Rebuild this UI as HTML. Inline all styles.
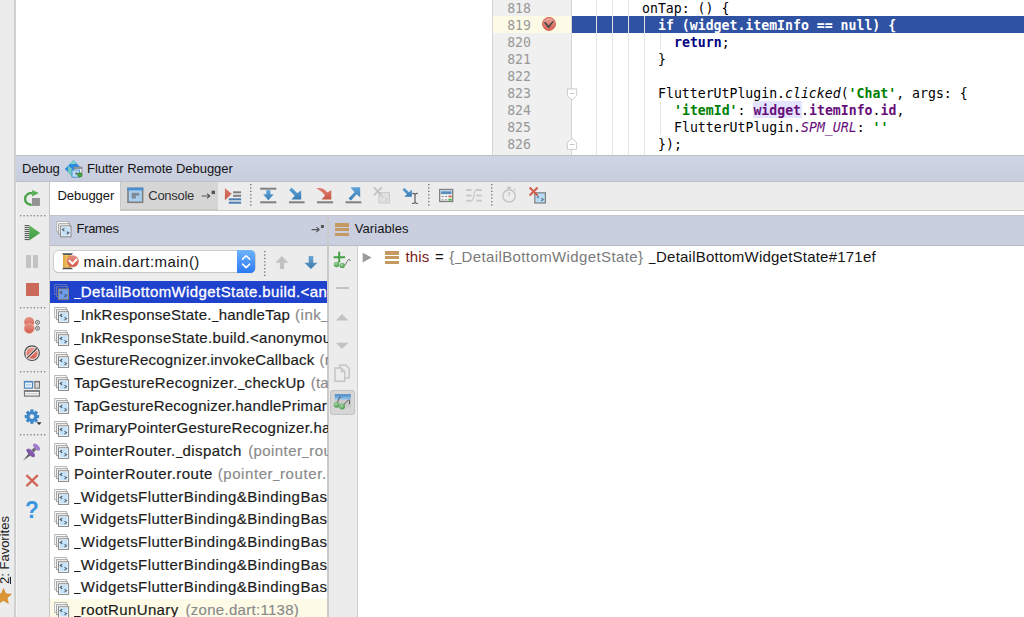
<!DOCTYPE html>
<html>
<head>
<meta charset="utf-8">
<title>Flutter Remote Debugger</title>
<style>
html,body{margin:0;padding:0;}
body{width:1024px;height:617px;overflow:hidden;background:#fff;position:relative;font-family:"Liberation Sans",sans-serif;color:#1d1d1d;}
.abs{position:absolute;overflow:visible;}
.box{position:absolute;}
.code{position:absolute;font-family:"DejaVu Sans Mono","Liberation Mono",monospace;font-size:13.2px;line-height:17px;height:17px;white-space:pre;color:#000;}
.ln{position:absolute;left:500px;width:31px;text-align:right;font-family:"DejaVu Sans Mono","Liberation Mono",monospace;font-size:13.2px;line-height:17px;height:17px;color:#999;}
.kw{color:#000080;font-weight:bold;}
.st{color:#008000;font-weight:bold;}
.fd{color:#660e7a;font-weight:bold;}
.sf{color:#660e7a;font-style:italic;}
.it{font-style:italic;}
.guide{position:absolute;width:1px;background:#e4e4e4;}
.ui{position:absolute;white-space:pre;font-size:13px;line-height:16px;color:#141414;}
.fr{-webkit-text-stroke:0.18px currentColor;position:absolute;left:74px;white-space:pre;font-size:15px;line-height:20px;height:20px;color:#1c1c1c;overflow:hidden;width:253.5px;}
.fr i{font-style:normal;color:#8a8a8a;}
.fr.sel{color:#fff;-webkit-text-stroke:0.3px #fff;}
.fr u,.ui u{text-decoration:none;letter-spacing:0;display:inline-block;transform:scaleX(0.78);transform-origin:0 50%;margin-right:-1.5px;position:relative;top:-0.8px;}
.hdot{position:absolute;height:1.4px;width:26px;background:repeating-linear-gradient(90deg,#8c8c8c 0,#8c8c8c 1.3px,transparent 1.3px,transparent 3.45px);}
.vdot{position:absolute;width:1.4px;background:repeating-linear-gradient(180deg,#8c8c8c 0,#8c8c8c 1.3px,transparent 1.3px,transparent 3.4px);}
</style>
</head>
<body>
<svg width="0" height="0" style="position:absolute">
<defs>
<linearGradient id="gblue" x1="0" y1="0" x2="0" y2="1"><stop offset="0" stop-color="#5fa4d8"/><stop offset="1" stop-color="#387cb5"/></linearGradient>
<linearGradient id="gsteel" x1="0" y1="0" x2="0" y2="1"><stop offset="0" stop-color="#6ba5d1"/><stop offset="1" stop-color="#3a7aae"/></linearGradient>
<linearGradient id="gred" x1="0" y1="0" x2="0" y2="1"><stop offset="0" stop-color="#dd7d6d"/><stop offset="1" stop-color="#c75846"/></linearGradient>
<linearGradient id="ggreen" x1="0" y1="0" x2="0" y2="1"><stop offset="0" stop-color="#62b562"/><stop offset="1" stop-color="#3f9a3f"/></linearGradient>
<linearGradient id="gcombo" x1="0" y1="0" x2="0" y2="1"><stop offset="0" stop-color="#6cb3fb"/><stop offset="1" stop-color="#2a78f4"/></linearGradient>
</defs>
</svg>

<!-- left tool strip -->
<div class="box" style="left:0;top:0;width:14.3px;height:617px;background:#ececec;"></div>
<div class="box" style="left:14.3px;top:0;width:1.5px;height:617px;background:#d0d0d0;"></div>
<div class="ui" style="left:-3.5px;top:584px;font-size:13px;line-height:16px;transform-origin:0 0;transform:rotate(-90deg);color:#222;"><span style="text-decoration:underline;">2</span>: Favorites</div>
<svg class="abs" style="left:-5px;top:588px;" width="17" height="16" viewBox="0 0 17 16"><path d="M8.5 0.6 L10.7 5.7 L16.3 6.2 L12.1 9.9 L13.4 15.4 L8.5 12.5 L3.6 15.4 L4.9 9.9 L0.7 6.2 L6.3 5.7 Z" fill="#dc9533" stroke="#c9842a" stroke-width="0.6"/></svg>

<!-- editor gutter -->
<div class="box" style="left:492px;top:0;width:1px;height:155px;background:#d6d6d6;"></div>
<div class="box" style="left:493px;top:0;width:79px;height:155px;background:#f0f0f0;"></div>
<div class="box" style="left:493px;top:16px;width:79px;height:17px;background:#fdfbe6;"></div>
<div class="box" style="left:572px;top:16px;width:452px;height:17px;background:#2f52a3;"></div>
<div class="guide" style="left:596px;top:0;height:155px;"></div>
<div class="guide" style="left:612px;top:0;height:155px;"></div>
<div class="guide" style="left:628px;top:0;height:155px;"></div>
<div class="guide" style="left:644px;top:16px;height:139px;"></div>
<div class="guide" style="left:660px;top:33px;height:17px;"></div>
<div class="guide" style="left:660px;top:101px;height:34px;"></div>

<div class="ln" style="top:0px;">818</div>
<div class="ln" style="top:17px;">819</div>
<div class="ln" style="top:34px;">820</div>
<div class="ln" style="top:51px;">821</div>
<div class="ln" style="top:68px;">822</div>
<div class="ln" style="top:85px;">823</div>
<div class="ln" style="top:102px;">824</div>
<div class="ln" style="top:119px;">825</div>
<div class="ln" style="top:136px;">826</div>

<!-- breakpoint icon -->
<svg class="abs" style="left:541px;top:16px;" width="16" height="16" viewBox="0 0 16 16"><defs><linearGradient id="bp" x1="0" y1="0" x2="0" y2="1"><stop offset="0" stop-color="#eaa9a0"/><stop offset="0.75" stop-color="#db6c5f"/></linearGradient></defs><circle cx="8" cy="7.9" r="6.5" fill="url(#bp)" stroke="#d0584b" stroke-width="0.9"/><path d="M3.6 6.2 L7.6 11 L12.1 5.4" fill="none" stroke="#38454a" stroke-width="1.5"/></svg>
<!-- fold markers -->
<div class="box" style="left:571px;top:0;width:1px;height:155px;background:#d6d6d6;"></div>
<svg class="abs" style="left:566px;top:88px;" width="12" height="13" viewBox="0 0 12 13"><path d="M1.4 0.9 H10.7 V7.8 L6.05 12 L1.4 7.8 Z" fill="#fff" stroke="#c6c6c6" stroke-width="0.9"/><path d="M3.7 5.4 H8.5" stroke="#c0c0c0" stroke-width="0.9"/></svg>
<svg class="abs" style="left:566px;top:138px;" width="12" height="13" viewBox="0 0 12 13"><path d="M1.4 11.4 H10.7 V4.6 L6.05 0.5 L1.4 4.6 Z" fill="#fff" stroke="#c6c6c6" stroke-width="0.9"/><path d="M3.7 6.5 H8.5" stroke="#c0c0c0" stroke-width="0.9"/></svg>

<!-- code -->
<div class="code" style="left:642px;top:0px;">onTap: () {</div>
<div class="code" style="left:658px;top:17px;color:#fff;font-weight:bold;">if (widget.itemInfo == null) {</div>
<div class="code" style="left:674px;top:34px;"><span class="kw">return</span>;</div>
<div class="code" style="left:658px;top:51px;">}</div>
<div class="code" style="left:658px;top:85px;">FlutterUtPlugin.<span class="it">clicked</span>(<span class="st">'Chat'</span>, args: {</div>
<div class="box" style="left:753px;top:101px;width:49px;height:17px;background:#e4e4ff;"></div>
<div class="code" style="left:674px;top:102px;"><span class="st">'itemId'</span>: <span class="fd">widget</span>.<span class="fd">itemInfo</span>.<span class="fd">id</span>,</div>
<div class="code" style="left:674px;top:119px;">FlutterUtPlugin.<span class="sf">SPM_URL</span>: <span class="st">''</span></div>
<div class="code" style="left:658px;top:136px;">});</div>

<!-- debug header -->
<div class="box" style="left:16px;top:155px;width:1008px;height:27px;background:linear-gradient(#d0d6e6,#c7cddd);"></div>
<div class="box" style="left:16px;top:181.2px;width:1008px;height:0.8px;background:#bcc1cd;"></div>
<div class="box" style="left:16px;top:155px;width:1008px;height:1px;background:#bdc0c8;"></div>
<div class="ui" style="left:22px;top:161px;letter-spacing:-0.15px;">Debug</div>
<div class="ui" style="left:87px;top:161px;letter-spacing:-0.04px;">Flutter Remote Debugger</div>
<!-- dart/flutter run icon -->
<svg class="abs" style="left:64px;top:159px;" width="19" height="19" viewBox="0 0 19 19">
<path d="M9.4 1 L17.9 10 L9.4 18.8 L0.9 10 Z" fill="#2c8ae2"/>
<path d="M9.4 1 L12.6 4.9 L5.5 4.9 Z" fill="#7fd3c2"/>
<path d="M4 6.4 L8.2 10 L8.2 18 L4 13.6 Z" fill="#74c9bd"/>
<rect x="10.3" y="8.2" width="7.6" height="6.5" fill="#f2f2f2" stroke="#8a8a8a" stroke-width="0.9"/>
<rect x="10.3" y="8.2" width="7.6" height="1.7" fill="#8a8a8a"/>
<rect x="8" y="11" width="7.4" height="7.2" fill="#b7dcf7" stroke="#4d8fd0" stroke-width="0.9"/>
<path d="M14.6 14.5 H11.5 M12.9 13 L11.3 14.5 L12.9 16" stroke="#666" stroke-width="0.9" fill="none"/>
<circle cx="15.9" cy="15.9" r="2.2" fill="#46a53f" stroke="#2f7f2b" stroke-width="0.7"/>
</svg>

<!-- toolbar row -->
<div class="box" style="left:16px;top:182px;width:1008px;height:28.3px;background:#ececec;"></div>
<div class="box" style="left:16px;top:210.2px;width:1008px;height:1px;background:#cacaca;"></div>
<div class="box" style="left:49.8px;top:182px;width:70px;height:34px;background:#fff;"></div>
<div class="box" style="left:119.6px;top:182px;width:98.9px;height:28.4px;background:#d6d6d6;box-shadow:inset 1px -1px 0 #c8c8c8;"></div>
<div class="ui" style="left:57.5px;top:188px;letter-spacing:-0.05px;">Debugger</div>
<div class="ui" style="left:148.3px;top:188px;color:#333;letter-spacing:-0.3px;">Console</div>
<!-- console icon -->
<svg class="abs" style="left:127px;top:187px;" width="17" height="17" viewBox="0 0 17 17">
<rect x="1" y="1.4" width="14.6" height="13.9" fill="#a9d0f0" stroke="#7e7e7e" stroke-width="1.6"/>
<rect x="0.2" y="0.6" width="16.2" height="2.8" fill="#4b8fcf"/>
<rect x="4.6" y="5.8" width="7.8" height="5.8" fill="#7f8a94"/>
<rect x="8.8" y="8.6" width="3.8" height="3.2" fill="#a9d0f0"/>
</svg>
<!-- pin arrow (console) -->
<svg class="abs" style="left:201px;top:189px;" width="16" height="12" viewBox="0 0 16 12"><path d="M0.8 7 H8.6 M6 4.6 L8.8 7 L6 9.4" fill="none" stroke="#555" stroke-width="1.1"/><rect x="10.6" y="1.7" width="3.4" height="3.4" fill="#555"/></svg>

<!-- show execution point -->
<svg class="abs" style="left:224px;top:186px;" width="19" height="19" viewBox="0 0 19 19">
<path d="M0.9 1.9 L7.7 7.7 L0.9 14.2 Z" fill="url(#gred)"/>
<rect x="9.1" y="5.3" width="8" height="2" fill="#808080"/>
<rect x="9.1" y="8.8" width="8" height="2" fill="#808080"/>
<rect x="4.8" y="12.3" width="12.3" height="2" fill="#4d7faf"/>
<rect x="4.8" y="15.7" width="12.3" height="2" fill="#4d7faf"/>
</svg>
<svg class="abs" style="left:250.4px;top:183.5px;" width="2" height="23.8" viewBox="0 0 2 23.8" fill="#7c7c7c"><rect x="0" y="0.00" width="1.5" height="1.25"/><rect x="0" y="3.40" width="1.5" height="1.25"/><rect x="0" y="6.80" width="1.5" height="1.25"/><rect x="0" y="10.20" width="1.5" height="1.25"/><rect x="0" y="13.60" width="1.5" height="1.25"/><rect x="0" y="17.00" width="1.5" height="1.25"/><rect x="0" y="20.40" width="1.5" height="1.25"/></svg>
<!-- step over -->
<svg class="abs" style="left:259px;top:186px;" width="19" height="19" viewBox="0 0 19 19">
<rect x="1.2" y="1.7" width="16.1" height="2" fill="#808080"/>
<rect x="1.2" y="15.3" width="16.1" height="2" fill="#808080"/>
<path d="M7.3 4.2 H11.4 V8.3 H14.7 L9.4 14.2 L4.1 8.3 H7.3 Z" fill="url(#gblue)"/>
</svg>
<!-- step into -->
<svg class="abs" style="left:288px;top:186px;" width="19" height="19" viewBox="0 0 19 19">
<rect x="0.9" y="15.3" width="15.7" height="2" fill="#808080"/>
<path d="M1.1 4 L3.6 1.6 L9.3 7.3 L13.2 4.2 V13.6 H3.3 L6.8 9.8 Z" fill="url(#gblue)"/>
</svg>
<!-- force step into -->
<svg class="abs" style="left:316px;top:186px;" width="19" height="19" viewBox="0 0 19 19">
<rect x="1" y="15.3" width="16.1" height="2" fill="#808080"/>
<path d="M0.3 2.3 C4.5 1.6 8.6 2.6 11.4 6.6 L15.3 4.1 V13.6 H5.6 L9 9.5 C7 6.2 4.4 4.6 0.3 2.3 Z" fill="url(#gred)"/>
</svg>
<!-- step out -->
<svg class="abs" style="left:345px;top:186px;" width="19" height="19" viewBox="0 0 19 19">
<rect x="0.5" y="15.3" width="15.9" height="2" fill="#808080"/>
<path d="M3.5 12.4 L9.6 6.3 L5.4 1.3 H15.2 V11.2 L11.6 8.3 L5.9 14.4 Z" fill="url(#gblue)"/>
</svg>
<!-- drop frame (disabled) -->
<svg class="abs" style="left:372px;top:186px;" width="19" height="19" viewBox="0 0 19 19">
<rect x="6.9" y="6.5" width="10.6" height="10.4" fill="#e0e0e0" stroke="#cbcbcb" stroke-width="1"/>
<path d="M11 10 L9.8 10.8 L11 11.6 M13.2 12.3 L15.1 13.5 L13.2 14.7" stroke="#c6c6c6" stroke-width="0.9" fill="none"/>
<path d="M1.8 1.4 L9.8 9.4 M9.8 1.4 L1.8 9.4" stroke="#c2c2c2" stroke-width="1.9" fill="none"/>
</svg>
<!-- run to cursor -->
<svg class="abs" style="left:401px;top:186px;" width="19" height="19" viewBox="0 0 19 19">
<path d="M1.4 3.8 L3.4 1.8 L7.9 6.2 L10.9 3.6 V10.8 H3.2 L6 8.3 Z" fill="url(#gblue)"/>
<path d="M11.2 7.3 C12.6 7.3 13.4 7.6 14 8.3 C14.6 7.6 15.4 7.3 16.8 7.3 M11.2 17.5 C12.6 17.5 13.4 17.2 14 16.5 C14.6 17.2 15.4 17.5 16.8 17.5 M14 8.3 V16.5" fill="none" stroke="#4a4a4a" stroke-width="1.05"/>
</svg>
<svg class="abs" style="left:427.7px;top:183.5px;" width="2" height="23.8" viewBox="0 0 2 23.8" fill="#7c7c7c"><rect x="0" y="0.00" width="1.5" height="1.25"/><rect x="0" y="3.40" width="1.5" height="1.25"/><rect x="0" y="6.80" width="1.5" height="1.25"/><rect x="0" y="10.20" width="1.5" height="1.25"/><rect x="0" y="13.60" width="1.5" height="1.25"/><rect x="0" y="17.00" width="1.5" height="1.25"/><rect x="0" y="20.40" width="1.5" height="1.25"/></svg>
<!-- evaluate expression -->
<svg class="abs" style="left:438px;top:188px;" width="17" height="15" viewBox="0 0 17 15">
<rect x="1.7" y="1.5" width="13" height="12" fill="#fafafa" stroke="#7d7d7d" stroke-width="1.3"/>
<rect x="2.6" y="2.4" width="11.2" height="1" fill="#a9cff0"/>
<rect x="2.9" y="3.3" width="10.6" height="2.9" fill="#5d8dbd"/>
<rect x="3.5" y="7.9" width="2.2" height="1.2" fill="#8f8f8f"/><rect x="7" y="7.9" width="2.2" height="1.2" fill="#8f8f8f"/>
<rect x="3.5" y="10.8" width="2.2" height="1.8" fill="#b4b4b4"/><rect x="7" y="10.8" width="2.2" height="1.8" fill="#b4b4b4"/>
<rect x="10.5" y="7.6" width="3.2" height="1.7" fill="#d25545"/>
<rect x="10.5" y="10.7" width="3.2" height="1.9" fill="#42b142"/>
</svg>
<!-- trace (disabled) -->
<svg class="abs" style="left:465px;top:187px;" width="19" height="17" viewBox="0 0 19 17">
<path d="M1 2.9 H6.6 M1 8.4 H6.6 M1 13.8 H6.6 M11.3 2.9 H16.9 M11.3 8.4 H16.9 M11.3 13.8 H16.9" stroke="#c9c9c9" stroke-width="2" fill="none"/>
<path d="M6.6 13.8 C9.6 13.8 8.3 2.9 11.3 2.9" stroke="#c9c9c9" stroke-width="1.2" fill="none"/>
</svg>
<svg class="abs" style="left:491.4px;top:183.5px;" width="2" height="23.8" viewBox="0 0 2 23.8" fill="#7c7c7c"><rect x="0" y="0.00" width="1.5" height="1.25"/><rect x="0" y="3.40" width="1.5" height="1.25"/><rect x="0" y="6.80" width="1.5" height="1.25"/><rect x="0" y="10.20" width="1.5" height="1.25"/><rect x="0" y="13.60" width="1.5" height="1.25"/><rect x="0" y="17.00" width="1.5" height="1.25"/><rect x="0" y="20.40" width="1.5" height="1.25"/></svg>
<!-- stopwatch (disabled) -->
<svg class="abs" style="left:500px;top:186px;" width="19" height="19" viewBox="0 0 19 19">
<circle cx="9.1" cy="9.9" r="6.1" fill="none" stroke="#c4c4c4" stroke-width="1.4"/>
<path d="M7 1.6 H11.2" stroke="#c4c4c4" stroke-width="1.6"/>
<path d="M9.1 2 V3.8 M9.1 6 V10 M14 4.2 L15.2 3" stroke="#c4c4c4" stroke-width="1.3"/>
</svg>
<!-- close/remove frame -->
<svg class="abs" style="left:528px;top:186px;" width="19" height="19" viewBox="0 0 19 19">
<rect x="6.8" y="6.8" width="10.6" height="10.2" fill="#b8dcf6" stroke="#7f7f7f" stroke-width="1.2"/>
<path d="M10.6 10.4 L9.4 11.2 L10.6 12 M13.4 12.4 L15.4 13.6 L13.4 14.9" stroke="#39424a" stroke-width="1" fill="none"/>
<path d="M1.6 1.5 L9.6 9.5 M9.6 1.5 L1.6 9.5" stroke="#d1604e" stroke-width="2.1" fill="none"/>
</svg>

<!-- left icon column -->
<div class="box" style="left:16px;top:182px;width:33px;height:435px;background:#ececec;"></div>
<div class="box" style="left:15.8px;top:182px;width:1.2px;height:435px;background:#f6f6f6;"></div>
<div class="box" style="left:48.8px;top:182px;width:1.2px;height:435px;background:#c6c6c6;"></div>
<!-- rerun -->
<svg class="abs" style="left:22px;top:188px;" width="20" height="20" viewBox="0 0 20 20">
<path d="M10.1 5.23 A5.8 5.8 0 1 0 9.7 16.64" fill="none" stroke="#4aa54a" stroke-width="2.4"/>
<path d="M10.1 1.9 L16.8 5.1 L10.1 8.6 Z" fill="#55b055"/>
<rect x="10" y="10" width="7.9" height="7.9" fill="#939393"/>
</svg>
<svg class="abs" style="left:20.2px;top:215.2px;" width="26" height="2" viewBox="0 0 26 2" fill="#858585"><rect x="0.00" y="0" width="1.3" height="1.4"/><rect x="3.45" y="0" width="1.3" height="1.4"/><rect x="6.90" y="0" width="1.3" height="1.4"/><rect x="10.35" y="0" width="1.3" height="1.4"/><rect x="13.80" y="0" width="1.3" height="1.4"/><rect x="17.25" y="0" width="1.3" height="1.4"/><rect x="20.70" y="0" width="1.3" height="1.4"/><rect x="24.15" y="0" width="1.3" height="1.4"/></svg>
<!-- resume -->
<svg class="abs" style="left:23px;top:224px;" width="19" height="18" viewBox="0 0 19 18">
<path d="M1.6 1.6 H6.4 M1.6 3.6 H6.4 M1.6 5.6 H6.4 M1.6 7.6 H6.4 M1.6 9.6 H6.4 M1.6 11.6 H6.4 M1.6 13.6 H6.4 M1.6 15.6 H6.4" stroke="#3c3c3c" stroke-width="0.9"/>
<path d="M6.2 1.2 L17.2 8.9 L6.2 16.6 Z" fill="url(#ggreen)"/>
</svg>
<!-- pause (disabled) -->
<div class="box" style="left:26.1px;top:254.8px;width:5px;height:13.2px;background:#c3c3c3;"></div>
<div class="box" style="left:32.8px;top:254.8px;width:5px;height:13.2px;background:#c3c3c3;"></div>
<!-- stop -->
<div class="box" style="left:25.8px;top:282.9px;width:13.5px;height:13.6px;background:#cb6a5a;"></div>
<svg class="abs" style="left:20.2px;top:307.1px;" width="26" height="2" viewBox="0 0 26 2" fill="#858585"><rect x="0.00" y="0" width="1.3" height="1.4"/><rect x="3.45" y="0" width="1.3" height="1.4"/><rect x="6.90" y="0" width="1.3" height="1.4"/><rect x="10.35" y="0" width="1.3" height="1.4"/><rect x="13.80" y="0" width="1.3" height="1.4"/><rect x="17.25" y="0" width="1.3" height="1.4"/><rect x="20.70" y="0" width="1.3" height="1.4"/><rect x="24.15" y="0" width="1.3" height="1.4"/></svg>
<!-- view breakpoints -->
<svg class="abs" style="left:23px;top:315px;" width="19" height="20" viewBox="0 0 19 20">
<defs><linearGradient id="bpg" x1="0" y1="0" x2="0" y2="1"><stop offset="0" stop-color="#e6978b"/><stop offset="1" stop-color="#d55b4b"/></linearGradient></defs>
<circle cx="6.2" cy="7" r="5" fill="url(#bpg)"/>
<circle cx="6.2" cy="13.3" r="5.1" fill="url(#bpg)" stroke="#eaa79e" stroke-width="0.6"/>
<circle cx="14.5" cy="7.4" r="2" fill="#dadada" stroke="#6e6e6e" stroke-width="1"/>
<circle cx="14.5" cy="13.3" r="2" fill="#dadada" stroke="#6e6e6e" stroke-width="1"/>
<circle cx="14.5" cy="7.4" r="0.7" fill="#7c7c7c"/><circle cx="14.5" cy="13.3" r="0.7" fill="#7c7c7c"/>
</svg>
<!-- mute breakpoints -->
<svg class="abs" style="left:23px;top:344px;" width="18" height="18" viewBox="0 0 18 18">
<circle cx="9" cy="9.2" r="5.6" fill="url(#bpg)"/>
<circle cx="9" cy="9.2" r="7.3" fill="none" stroke="#4c4c4c" stroke-width="1.2"/>
<path d="M3.8 14.4 L14.2 4" stroke="#f3e3e0" stroke-width="3"/>
<path d="M3.8 14.4 L14.2 4" stroke="#444" stroke-width="1.3"/>
</svg>
<svg class="abs" style="left:20.2px;top:370.9px;" width="26" height="2" viewBox="0 0 26 2" fill="#858585"><rect x="0.00" y="0" width="1.3" height="1.4"/><rect x="3.45" y="0" width="1.3" height="1.4"/><rect x="6.90" y="0" width="1.3" height="1.4"/><rect x="10.35" y="0" width="1.3" height="1.4"/><rect x="13.80" y="0" width="1.3" height="1.4"/><rect x="17.25" y="0" width="1.3" height="1.4"/><rect x="20.70" y="0" width="1.3" height="1.4"/><rect x="24.15" y="0" width="1.3" height="1.4"/></svg>
<!-- restore layout -->
<svg class="abs" style="left:23px;top:380px;" width="18" height="18" viewBox="0 0 18 18">
<rect x="1.5" y="1.6" width="8" height="6.5" fill="#fff" stroke="#4f86bd" stroke-width="1.3"/>
<rect x="0.9" y="0.9" width="9.2" height="1.5" fill="#4f86bd"/>
<rect x="3" y="3.6" width="5" height="2.6" fill="#b4d8f4"/>
<rect x="11.9" y="1.6" width="4.5" height="6.5" fill="#f4f4f4" stroke="#767676" stroke-width="1.2"/>
<rect x="11.3" y="0.9" width="5.7" height="1.5" fill="#767676"/>
<path d="M14.15 3.4 V7 M12.8 5.2 H15.5" stroke="#b0b0b0" stroke-width="0.6"/>
<rect x="1.5" y="11" width="14.9" height="5.1" fill="#f6f6f6" stroke="#767676" stroke-width="1.2"/>
<rect x="0.9" y="10.2" width="16.1" height="1.5" fill="#767676"/>
<path d="M3.2 13.7 H14.7" stroke="#b0b0b0" stroke-width="0.7"/>
</svg>
<!-- settings gear -->
<svg class="abs" style="left:23px;top:408px;" width="20" height="20" viewBox="0 0 20 20">
<g transform="translate(8.9 8.6)">
<g fill="#3c87c8">
<rect x="-1.6" y="-7.2" width="3.2" height="14.4"/>
<rect x="-1.6" y="-7.2" width="3.2" height="14.4" transform="rotate(45)"/>
<rect x="-1.6" y="-7.2" width="3.2" height="14.4" transform="rotate(90)"/>
<rect x="-1.6" y="-7.2" width="3.2" height="14.4" transform="rotate(135)"/>
<circle r="5.3"/>
</g>
<circle r="2.3" fill="#ececec"/>
</g>
<path d="M13.6 14.2 H18.6 L16.1 17 Z" fill="#2c2c2c"/>
</svg>
<svg class="abs" style="left:20.2px;top:434.4px;" width="26" height="2" viewBox="0 0 26 2" fill="#858585"><rect x="0.00" y="0" width="1.3" height="1.4"/><rect x="3.45" y="0" width="1.3" height="1.4"/><rect x="6.90" y="0" width="1.3" height="1.4"/><rect x="10.35" y="0" width="1.3" height="1.4"/><rect x="13.80" y="0" width="1.3" height="1.4"/><rect x="17.25" y="0" width="1.3" height="1.4"/><rect x="20.70" y="0" width="1.3" height="1.4"/><rect x="24.15" y="0" width="1.3" height="1.4"/></svg>
<!-- pin tab -->
<svg class="abs" style="left:22px;top:441px;" width="22" height="22" viewBox="0 0 22 22">
<path d="M1.2 19.6 L6.6 12.6 L8.4 14.4 Z" fill="#5f5f5f"/>
<path d="M9.2 9.2 L12.4 6.2 L14.6 8.4 L11.6 11.6 Z" fill="#6e6e6e"/>
<ellipse cx="8.9" cy="11.7" rx="5.4" ry="2.5" transform="rotate(45 8.9 11.7)" fill="#9069ba"/>
<ellipse cx="8.3" cy="12.3" rx="5.2" ry="1.7" transform="rotate(45 8.3 12.3)" fill="#7f58aa"/>
<ellipse cx="14.6" cy="6.1" rx="4.3" ry="2.2" transform="rotate(45 14.6 6.1)" fill="#a17ccb"/>
</svg>
<!-- close X -->
<svg class="abs" style="left:24px;top:473px;" width="16" height="15" viewBox="0 0 16 15"><path d="M2.4 2.2 L13.8 13.2 M13.8 2.2 L2.4 13.2" stroke="#d0675a" stroke-width="2.3" fill="none"/></svg>
<!-- help -->
<div class="ui" style="left:25.4px;top:498.8px;font-size:24px;line-height:22px;font-weight:bold;color:#3d96df;transform:scaleX(0.94);transform-origin:0 0;">?</div>

<!-- frames / variables headers -->
<div class="box" style="left:50px;top:211.2px;width:974px;height:4px;background:#fff;"></div>
<div class="box" style="left:50px;top:215px;width:974px;height:31px;background:#c9cfdf;"></div>
<div class="box" style="left:50px;top:215px;width:974px;height:0.9px;background:#c2c5cd;"></div>
<div class="box" style="left:50px;top:245.1px;width:974px;height:0.9px;background:#b6bbc7;"></div>
<div class="ui" style="left:76.6px;top:221px;letter-spacing:-0.35px;">Frames</div>
<div class="ui" style="left:354.8px;top:221px;letter-spacing:0.05px;">Variables</div>
<svg class="abs" style="left:56px;top:221.3px;" width="15.4" height="16.4" viewBox="0 0 15 16"><rect x="0.7" y="0.6" width="11.6" height="10" fill="#fff" stroke="#adadad" stroke-width="0.9"/><rect x="2.6" y="2.7" width="10.8" height="10" fill="#f6f6f6" stroke="#969696" stroke-width="0.9"/><rect x="4.5" y="4.8" width="10.1" height="10.6" fill="#fff" stroke="#868686" stroke-width="1"/><rect x="5.6" y="5.9" width="7.9" height="8.4" fill="#c4e3fa"/><path d="M8.2 7.2 L6.2 8.4 L8.2 9.7 M10.5 10.4 L12.5 11.6 L10.5 13.1" fill="none" stroke="#4f5960" stroke-width="1.1"/></svg>
<svg class="abs" style="left:311px;top:223px;" width="16" height="12" viewBox="0 0 16 12"><path d="M0.6 6.6 H8 M5.4 4.2 L8.2 6.6 L5.4 9" fill="none" stroke="#555" stroke-width="1.1"/><rect x="9.9" y="2" width="3" height="3" fill="#555"/></svg>
<!-- variables icon -->
<div class="box" style="left:335.3px;top:223.3px;width:13.6px;height:3.3px;background:#c49a60;"></div>
<div class="box" style="left:335.3px;top:228px;width:13.6px;height:3.3px;background:#c49a60;"></div>
<div class="box" style="left:335.3px;top:232.7px;width:13.6px;height:3.3px;background:#c49a60;"></div>

<!-- frames toolbar row -->
<div class="box" style="left:50px;top:246px;width:278px;height:34.6px;background:#ececec;"></div>
<!-- combo -->
<div class="box" style="left:54.1px;top:250.9px;width:200.9px;height:21.6px;background:#fff;border-radius:4.5px;box-shadow:0 0 0 0.8px #c5c5c5,0 0.8px 1px rgba(0,0,0,0.18);"></div>
<div class="box" style="left:236.9px;top:249.8px;width:18.3px;height:23.2px;background:linear-gradient(#6db4fb,#2b79f5);border-radius:0 4.5px 4.5px 0;"></div>
<svg class="abs" style="left:236.9px;top:249.8px;" width="18.3" height="23.2" viewBox="0 0 18.3 23.2"><path d="M5.6 9.2 L9.15 5.8 L12.7 9.2 M5.6 14.2 L9.15 17.6 L12.7 14.2" fill="none" stroke="#fff" stroke-width="1.6" stroke-linecap="round" stroke-linejoin="round"/></svg>
<!-- thread icon -->
<svg class="abs" style="left:61px;top:252px;" width="20" height="19" viewBox="0 0 20 19">
<defs><linearGradient id="spool" x1="0" y1="0" x2="1" y2="0"><stop offset="0" stop-color="#e9a93a"/><stop offset="0.45" stop-color="#f6d27c"/><stop offset="1" stop-color="#e3a233"/></linearGradient>
<linearGradient id="thr" x1="0" y1="0" x2="0" y2="1"><stop offset="0" stop-color="#e49287"/><stop offset="0.8" stop-color="#d95f4f"/></linearGradient></defs>
<rect x="2" y="2.6" width="7.8" height="13.6" fill="url(#spool)"/>
<path d="M2 4.8 H9.8 M2 6.8 H9.8 M2 8.8 H9.8 M2 10.8 H9.8 M2 12.8 H9.8 M2 14.8 H9.8" stroke="#d09432" stroke-width="0.6"/>
<path d="M1 1.3 H12 L10.6 2.9 H2.4 Z" fill="#4f5357"/>
<path d="M2.4 15.7 H10.6 L12 17.3 H1 Z" fill="#4f5357"/>
<circle cx="11.9" cy="9.3" r="5.6" fill="url(#thr)" stroke="#cf5a4b" stroke-width="0.5"/>
<path d="M7.9 8.1 L11.4 11.8 L16.1 6.9" fill="none" stroke="#fff" stroke-width="1.9"/>
</svg>
<div class="ui" style="left:83.4px;top:251.6px;font-size:15px;line-height:20px;color:#141414;letter-spacing:0.45px;">main.dart:main()</div>
<svg class="abs" style="left:264px;top:250.7px;" width="2" height="27.2" viewBox="0 0 2 27.2" fill="#7c7c7c"><rect x="0" y="0.00" width="1.5" height="1.25"/><rect x="0" y="3.40" width="1.5" height="1.25"/><rect x="0" y="6.80" width="1.5" height="1.25"/><rect x="0" y="10.20" width="1.5" height="1.25"/><rect x="0" y="13.60" width="1.5" height="1.25"/><rect x="0" y="17.00" width="1.5" height="1.25"/><rect x="0" y="20.40" width="1.5" height="1.25"/><rect x="0" y="23.80" width="1.5" height="1.25"/></svg>
<!-- up (disabled) / down arrows -->
<svg class="abs" style="left:275px;top:255px;" width="14" height="15" viewBox="0 0 14 15"><path d="M6.9 1 L13.4 7.7 H9.1 V13.9 H4.9 V7.7 H0.4 Z" fill="#c1c1c1"/></svg>
<svg class="abs" style="left:303.5px;top:255px;" width="14" height="15" viewBox="0 0 14 15"><path d="M6.95 14 L13.5 7.7 H9.2 V1 H4.7 V7.7 H0.4 Z" fill="url(#gsteel)"/></svg>

<!-- vertical divider frames|variables -->
<div class="box" style="left:327.1px;top:215px;width:1.7px;height:402px;background:#cbcbcb;"></div>
<!-- variables side toolbar -->
<div class="box" style="left:328.7px;top:246px;width:28.4px;height:371px;background:#ececec;"></div>
<div class="box" style="left:357px;top:246px;width:1px;height:371px;background:#cfcfcf;"></div>
<!-- add watch -->
<svg class="abs" style="left:332px;top:250px;" width="21" height="20" viewBox="0 0 21 20">
<defs><radialGradient id="lens" cx="0.4" cy="0.35" r="0.7"><stop offset="0" stop-color="#a8d6a8"/><stop offset="1" stop-color="#3f963f"/></radialGradient></defs>
<path d="M7.2 1.8 V12.6 M1.6 7.2 H13" stroke="#45a045" stroke-width="2" fill="none"/>
<path d="M12.8 15.4 L16.2 9.8 C16.8 8.9 17.8 9.4 18.4 11" stroke="#555" stroke-width="0.8" fill="none"/>
<circle cx="4.5" cy="14.5" r="2.7" fill="url(#lens)"/>
<circle cx="10.1" cy="15.4" r="2.7" fill="url(#lens)"/>
</svg>
<div class="box" style="left:335.8px;top:287.4px;width:12.8px;height:2px;background:#c2c2c2;"></div>
<svg class="abs" style="left:335px;top:313px;" width="14" height="8" viewBox="0 0 14 8"><path d="M0.9 7.5 L7 0.9 L13.3 7.5 Z" fill="#c2c2c2"/></svg>
<svg class="abs" style="left:335px;top:341.6px;" width="14" height="8" viewBox="0 0 14 8"><path d="M0.9 0.7 L7 7.1 L13.3 0.7 Z" fill="#c2c2c2"/></svg>
<!-- copy (disabled) -->
<svg class="abs" style="left:333px;top:363px;" width="18" height="20" viewBox="0 0 18 20">
<path d="M6.6 2 H12.6 L16.2 5.6 V15 H6.6 Z" fill="#ececec" stroke="#c3c3c3" stroke-width="1.4"/>
<path d="M2 5 H8.2 L11.8 8.6 V18.2 H2 Z" fill="#ececec" stroke="#c3c3c3" stroke-width="1.4"/>
<path d="M8.2 5 V8.6 H11.8" fill="none" stroke="#c3c3c3" stroke-width="1.1"/>
</svg>
<!-- watches in variables toggle (pressed) -->
<div class="box" style="left:330px;top:389.8px;width:25px;height:24.9px;background:#d6d6d6;border-radius:3.5px;box-shadow:inset 0 0 0 1px #c3c3c3;"></div>
<svg class="abs" style="left:333px;top:393px;" width="20" height="18" viewBox="0 0 20 18">
<defs><linearGradient id="sky" x1="0" y1="0" x2="0" y2="1"><stop offset="0" stop-color="#4287cc"/><stop offset="1" stop-color="#a6cbea"/></linearGradient></defs>
<rect x="1.75" y="1.2" width="16.1" height="13.2" fill="#c9c9c9"/>
<rect x="1.75" y="1.2" width="16.1" height="5.6" fill="url(#sky)"/>
<path d="M3.6 11.6 L6.4 4.6 C6.8 3.8 7.6 4 7.8 4.8" stroke="#3f3f3f" stroke-width="0.8" fill="none"/>
<path d="M10.6 11.6 L15.2 7.2 C15.9 6.6 16.7 7 16.6 8 L16.4 11.2" stroke="#3f3f3f" stroke-width="0.8" fill="none"/>
<circle cx="3.6" cy="11.8" r="2.9" fill="url(#lens)"/>
<circle cx="9.1" cy="13.5" r="2.9" fill="url(#lens)"/>
</svg>

<!-- variables content -->
<svg class="abs" style="left:362px;top:251.6px;" width="11" height="11" viewBox="0 0 11 11"><path d="M0.7 0.7 L9.6 5.5 L0.7 10.4 Z" fill="#9b9b9b"/></svg>
<div class="box" style="left:384.9px;top:251.3px;width:14.1px;height:3.4px;background:#c49a60;"></div>
<div class="box" style="left:384.9px;top:256.1px;width:14.1px;height:3.4px;background:#c49a60;"></div>
<div class="box" style="left:384.9px;top:260.9px;width:14.1px;height:3.4px;background:#c49a60;"></div>
<div class="ui" style="left:405.4px;top:247px;font-size:15px;line-height:20px;"><span style="color:#7a1a1a;letter-spacing:0.2px;">this</span><span style="letter-spacing:1.35px;"> =</span><span style="letter-spacing:-0.15px;"> </span><span style="color:#7a7a7a;letter-spacing:0.39px;">{<u>_</u>DetailBottomWidgetState}</span> <span style="letter-spacing:0.22px;"><u style="margin-left:1.6px;">_</u>DetailBottomWidgetState#171ef</span></div>

<!-- frames list -->
<div class="box" style="left:50px;top:280.6px;width:277.1px;height:22.4px;background:#1f42cd;"></div>
<div class="box" style="left:50px;top:598.6px;width:277.1px;height:19px;background:#fdfbe6;"></div>
<div class="fr sel" style="top:281.8px;letter-spacing:0.404px;"><u>_</u>DetailBottomWidgetState.build.&lt;an</div>
<svg class="abs" style="left:54px;top:284.3px;" width="15" height="16" viewBox="0 0 15 16"><rect x="0.7" y="0.6" width="11.6" height="10" fill="none" stroke="#6a78b8" stroke-width="0.8"/><rect x="2.6" y="2.7" width="10.8" height="10" fill="#1f42cd" stroke="#7a80a8" stroke-width="0.8"/><rect x="4.5" y="5" width="10" height="10.3" fill="#6d9cf0" stroke="#8d8472" stroke-width="1"/><path d="M8.2 7.2 L6.2 8.4 L8.2 9.7 M10.5 10.4 L12.5 11.6 L10.5 13.1" fill="none" stroke="#4a5560" stroke-width="1.2"/></svg>
<div class="fr" style="top:304.8px;letter-spacing:0.247px;"><u>_</u>InkResponseState.<u>_</u>handleTap <i style="letter-spacing:0.5px;margin-left:0.6px;">(ink<u>_</u></i></div>
<svg class="abs" style="left:54px;top:307.0px;" width="15" height="16" viewBox="0 0 15 16"><rect x="0.7" y="0.6" width="11.6" height="10" fill="#fff" stroke="#adadad" stroke-width="0.9"/><rect x="2.6" y="2.7" width="10.8" height="10" fill="#f6f6f6" stroke="#969696" stroke-width="0.9"/><rect x="4.5" y="4.8" width="10.1" height="10.6" fill="#fff" stroke="#868686" stroke-width="1"/><rect x="5.6" y="5.9" width="7.9" height="8.4" fill="#c4e3fa"/><path d="M8.2 7.2 L6.2 8.4 L8.2 9.7 M10.5 10.4 L12.5 11.6 L10.5 13.1" fill="none" stroke="#4f5960" stroke-width="1.1"/></svg>
<div class="fr" style="top:327.8px;letter-spacing:0.285px;"><u>_</u>InkResponseState.build.&lt;anonymou</div>
<svg class="abs" style="left:54px;top:329.7px;" width="15" height="16" viewBox="0 0 15 16"><rect x="0.7" y="0.6" width="11.6" height="10" fill="#fff" stroke="#adadad" stroke-width="0.9"/><rect x="2.6" y="2.7" width="10.8" height="10" fill="#f6f6f6" stroke="#969696" stroke-width="0.9"/><rect x="4.5" y="4.8" width="10.1" height="10.6" fill="#fff" stroke="#868686" stroke-width="1"/><rect x="5.6" y="5.9" width="7.9" height="8.4" fill="#c4e3fa"/><path d="M8.2 7.2 L6.2 8.4 L8.2 9.7 M10.5 10.4 L12.5 11.6 L10.5 13.1" fill="none" stroke="#4f5960" stroke-width="1.1"/></svg>
<div class="fr" style="top:349.8px;letter-spacing:0.22px;">GestureRecognizer.invokeCallback <i style="letter-spacing:0.2px;margin-left:0.6px;">(r</i></div>
<svg class="abs" style="left:54px;top:352.4px;" width="15" height="16" viewBox="0 0 15 16"><rect x="0.7" y="0.6" width="11.6" height="10" fill="#fff" stroke="#adadad" stroke-width="0.9"/><rect x="2.6" y="2.7" width="10.8" height="10" fill="#f6f6f6" stroke="#969696" stroke-width="0.9"/><rect x="4.5" y="4.8" width="10.1" height="10.6" fill="#fff" stroke="#868686" stroke-width="1"/><rect x="5.6" y="5.9" width="7.9" height="8.4" fill="#c4e3fa"/><path d="M8.2 7.2 L6.2 8.4 L8.2 9.7 M10.5 10.4 L12.5 11.6 L10.5 13.1" fill="none" stroke="#4f5960" stroke-width="1.1"/></svg>
<div class="fr" style="top:372.8px;letter-spacing:0.332px;">TapGestureRecognizer.<u>_</u>checkUp <i style="letter-spacing:0.2px;margin-left:1.0px;">(ta</i></div>
<svg class="abs" style="left:54px;top:375.1px;" width="15" height="16" viewBox="0 0 15 16"><rect x="0.7" y="0.6" width="11.6" height="10" fill="#fff" stroke="#adadad" stroke-width="0.9"/><rect x="2.6" y="2.7" width="10.8" height="10" fill="#f6f6f6" stroke="#969696" stroke-width="0.9"/><rect x="4.5" y="4.8" width="10.1" height="10.6" fill="#fff" stroke="#868686" stroke-width="1"/><rect x="5.6" y="5.9" width="7.9" height="8.4" fill="#c4e3fa"/><path d="M8.2 7.2 L6.2 8.4 L8.2 9.7 M10.5 10.4 L12.5 11.6 L10.5 13.1" fill="none" stroke="#4f5960" stroke-width="1.1"/></svg>
<div class="fr" style="top:395.8px;letter-spacing:0.215px;">TapGestureRecognizer.handlePrimar</div>
<svg class="abs" style="left:54px;top:397.8px;" width="15" height="16" viewBox="0 0 15 16"><rect x="0.7" y="0.6" width="11.6" height="10" fill="#fff" stroke="#adadad" stroke-width="0.9"/><rect x="2.6" y="2.7" width="10.8" height="10" fill="#f6f6f6" stroke="#969696" stroke-width="0.9"/><rect x="4.5" y="4.8" width="10.1" height="10.6" fill="#fff" stroke="#868686" stroke-width="1"/><rect x="5.6" y="5.9" width="7.9" height="8.4" fill="#c4e3fa"/><path d="M8.2 7.2 L6.2 8.4 L8.2 9.7 M10.5 10.4 L12.5 11.6 L10.5 13.1" fill="none" stroke="#4f5960" stroke-width="1.1"/></svg>
<div class="fr" style="top:417.8px;letter-spacing:0.24px;">PrimaryPointerGestureRecognizer.ha</div>
<svg class="abs" style="left:54px;top:420.5px;" width="15" height="16" viewBox="0 0 15 16"><rect x="0.7" y="0.6" width="11.6" height="10" fill="#fff" stroke="#adadad" stroke-width="0.9"/><rect x="2.6" y="2.7" width="10.8" height="10" fill="#f6f6f6" stroke="#969696" stroke-width="0.9"/><rect x="4.5" y="4.8" width="10.1" height="10.6" fill="#fff" stroke="#868686" stroke-width="1"/><rect x="5.6" y="5.9" width="7.9" height="8.4" fill="#c4e3fa"/><path d="M8.2 7.2 L6.2 8.4 L8.2 9.7 M10.5 10.4 L12.5 11.6 L10.5 13.1" fill="none" stroke="#4f5960" stroke-width="1.1"/></svg>
<div class="fr" style="top:440.8px;letter-spacing:0.415px;">PointerRouter.<u>_</u>dispatch <i style="letter-spacing:0.425px;margin-left:1.8px;">(pointer<u>_</u>rou</i></div>
<svg class="abs" style="left:54px;top:443.2px;" width="15" height="16" viewBox="0 0 15 16"><rect x="0.7" y="0.6" width="11.6" height="10" fill="#fff" stroke="#adadad" stroke-width="0.9"/><rect x="2.6" y="2.7" width="10.8" height="10" fill="#f6f6f6" stroke="#969696" stroke-width="0.9"/><rect x="4.5" y="4.8" width="10.1" height="10.6" fill="#fff" stroke="#868686" stroke-width="1"/><rect x="5.6" y="5.9" width="7.9" height="8.4" fill="#c4e3fa"/><path d="M8.2 7.2 L6.2 8.4 L8.2 9.7 M10.5 10.4 L12.5 11.6 L10.5 13.1" fill="none" stroke="#4f5960" stroke-width="1.1"/></svg>
<div class="fr" style="top:463.8px;letter-spacing:0.46px;">PointerRouter.route <i style="letter-spacing:0.584px;margin-left:0.2px;">(pointer<u>_</u>router.</i></div>
<svg class="abs" style="left:54px;top:465.9px;" width="15" height="16" viewBox="0 0 15 16"><rect x="0.7" y="0.6" width="11.6" height="10" fill="#fff" stroke="#adadad" stroke-width="0.9"/><rect x="2.6" y="2.7" width="10.8" height="10" fill="#f6f6f6" stroke="#969696" stroke-width="0.9"/><rect x="4.5" y="4.8" width="10.1" height="10.6" fill="#fff" stroke="#868686" stroke-width="1"/><rect x="5.6" y="5.9" width="7.9" height="8.4" fill="#c4e3fa"/><path d="M8.2 7.2 L6.2 8.4 L8.2 9.7 M10.5 10.4 L12.5 11.6 L10.5 13.1" fill="none" stroke="#4f5960" stroke-width="1.1"/></svg>
<div class="fr" style="top:486.8px;letter-spacing:0.44px;"><u>_</u>WidgetsFlutterBinding&amp;BindingBas</div>
<svg class="abs" style="left:54px;top:488.6px;" width="15" height="16" viewBox="0 0 15 16"><rect x="0.7" y="0.6" width="11.6" height="10" fill="#fff" stroke="#adadad" stroke-width="0.9"/><rect x="2.6" y="2.7" width="10.8" height="10" fill="#f6f6f6" stroke="#969696" stroke-width="0.9"/><rect x="4.5" y="4.8" width="10.1" height="10.6" fill="#fff" stroke="#868686" stroke-width="1"/><rect x="5.6" y="5.9" width="7.9" height="8.4" fill="#c4e3fa"/><path d="M8.2 7.2 L6.2 8.4 L8.2 9.7 M10.5 10.4 L12.5 11.6 L10.5 13.1" fill="none" stroke="#4f5960" stroke-width="1.1"/></svg>
<div class="fr" style="top:508.8px;letter-spacing:0.44px;"><u>_</u>WidgetsFlutterBinding&amp;BindingBas</div>
<svg class="abs" style="left:54px;top:511.3px;" width="15" height="16" viewBox="0 0 15 16"><rect x="0.7" y="0.6" width="11.6" height="10" fill="#fff" stroke="#adadad" stroke-width="0.9"/><rect x="2.6" y="2.7" width="10.8" height="10" fill="#f6f6f6" stroke="#969696" stroke-width="0.9"/><rect x="4.5" y="4.8" width="10.1" height="10.6" fill="#fff" stroke="#868686" stroke-width="1"/><rect x="5.6" y="5.9" width="7.9" height="8.4" fill="#c4e3fa"/><path d="M8.2 7.2 L6.2 8.4 L8.2 9.7 M10.5 10.4 L12.5 11.6 L10.5 13.1" fill="none" stroke="#4f5960" stroke-width="1.1"/></svg>
<div class="fr" style="top:531.8px;letter-spacing:0.44px;"><u>_</u>WidgetsFlutterBinding&amp;BindingBas</div>
<svg class="abs" style="left:54px;top:534.0px;" width="15" height="16" viewBox="0 0 15 16"><rect x="0.7" y="0.6" width="11.6" height="10" fill="#fff" stroke="#adadad" stroke-width="0.9"/><rect x="2.6" y="2.7" width="10.8" height="10" fill="#f6f6f6" stroke="#969696" stroke-width="0.9"/><rect x="4.5" y="4.8" width="10.1" height="10.6" fill="#fff" stroke="#868686" stroke-width="1"/><rect x="5.6" y="5.9" width="7.9" height="8.4" fill="#c4e3fa"/><path d="M8.2 7.2 L6.2 8.4 L8.2 9.7 M10.5 10.4 L12.5 11.6 L10.5 13.1" fill="none" stroke="#4f5960" stroke-width="1.1"/></svg>
<div class="fr" style="top:554.8px;letter-spacing:0.44px;"><u>_</u>WidgetsFlutterBinding&amp;BindingBas</div>
<svg class="abs" style="left:54px;top:556.7px;" width="15" height="16" viewBox="0 0 15 16"><rect x="0.7" y="0.6" width="11.6" height="10" fill="#fff" stroke="#adadad" stroke-width="0.9"/><rect x="2.6" y="2.7" width="10.8" height="10" fill="#f6f6f6" stroke="#969696" stroke-width="0.9"/><rect x="4.5" y="4.8" width="10.1" height="10.6" fill="#fff" stroke="#868686" stroke-width="1"/><rect x="5.6" y="5.9" width="7.9" height="8.4" fill="#c4e3fa"/><path d="M8.2 7.2 L6.2 8.4 L8.2 9.7 M10.5 10.4 L12.5 11.6 L10.5 13.1" fill="none" stroke="#4f5960" stroke-width="1.1"/></svg>
<div class="fr" style="top:576.8px;letter-spacing:0.44px;"><u>_</u>WidgetsFlutterBinding&amp;BindingBas</div>
<svg class="abs" style="left:54px;top:579.4px;" width="15" height="16" viewBox="0 0 15 16"><rect x="0.7" y="0.6" width="11.6" height="10" fill="#fff" stroke="#adadad" stroke-width="0.9"/><rect x="2.6" y="2.7" width="10.8" height="10" fill="#f6f6f6" stroke="#969696" stroke-width="0.9"/><rect x="4.5" y="4.8" width="10.1" height="10.6" fill="#fff" stroke="#868686" stroke-width="1"/><rect x="5.6" y="5.9" width="7.9" height="8.4" fill="#c4e3fa"/><path d="M8.2 7.2 L6.2 8.4 L8.2 9.7 M10.5 10.4 L12.5 11.6 L10.5 13.1" fill="none" stroke="#4f5960" stroke-width="1.1"/></svg>
<div class="fr" style="top:599.8px;letter-spacing:0.355px;"><u>_</u>rootRunUnary <i style="letter-spacing:0.3px;margin-left:2.4px;">(zone.dart:1138)</i></div>
<svg class="abs" style="left:54px;top:602.1px;" width="15" height="16" viewBox="0 0 15 16"><rect x="0.7" y="0.6" width="11.6" height="10" fill="#fff" stroke="#adadad" stroke-width="0.9"/><rect x="2.6" y="2.7" width="10.8" height="10" fill="#f6f6f6" stroke="#969696" stroke-width="0.9"/><rect x="4.5" y="4.8" width="10.1" height="10.6" fill="#fff" stroke="#868686" stroke-width="1"/><rect x="5.6" y="5.9" width="7.9" height="8.4" fill="#c4e3fa"/><path d="M8.2 7.2 L6.2 8.4 L8.2 9.7 M10.5 10.4 L12.5 11.6 L10.5 13.1" fill="none" stroke="#4f5960" stroke-width="1.1"/></svg>

</body>
</html>
